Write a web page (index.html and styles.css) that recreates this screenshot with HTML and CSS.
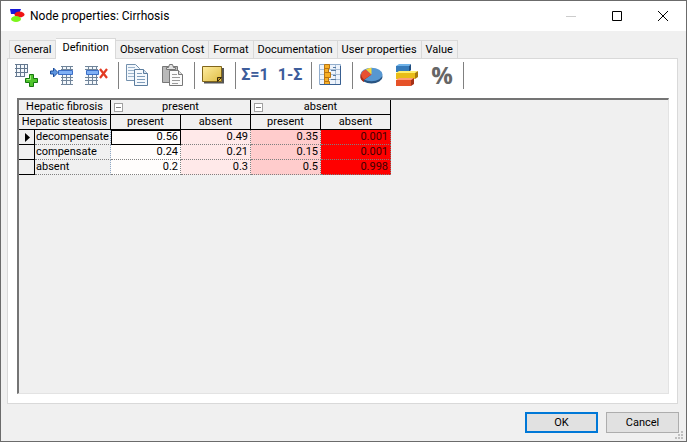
FILE: index.html
```html
<!DOCTYPE html>
<html lang="en">
<head>
  <meta charset="UTF-8">
  <title>Node properties: Cirrhosis</title>
  <link rel="stylesheet" href="styles.css">
</head>
<body>
  <div class="window">
    <header class="titlebar">
      <svg class="app-icon" width="16" height="16" viewBox="0 0 16 16">
        <path d="M1 1h11l-2 5H2z" fill="#1818d8"/>
        <ellipse cx="10.500" cy="6.500" rx="5" ry="3" fill="#f01414"/>
        <ellipse cx="7" cy="11" rx="5" ry="3" fill="#7cf51c"/>
      </svg>
      <h1>Node properties: Cirrhosis</h1>
      <div class="window-buttons">
        <button class="win-btn" aria-label="Minimize" disabled>
          <svg width="10" height="10"><path d="M0 5.500h10" stroke="#ccc"/></svg>
        </button>
        <button class="win-btn" aria-label="Maximize">
          <svg width="10" height="10"><path d="M.5.5h9v9h-9z" fill="none" stroke="#000"/></svg>
        </button>
        <button class="win-btn" aria-label="Close">
          <svg width="10" height="10"><path d="M0 0l10 10M10 0L0 10" stroke="#000"/></svg>
        </button>
      </div>
    </header>

    <main class="content">
      <nav class="tabs" role="tablist">
        <button class="tab" role="tab">General</button>
        <button class="tab active" role="tab" aria-selected="true">Definition</button>
        <button class="tab" role="tab">Observation Cost</button>
        <button class="tab" role="tab">Format</button>
        <button class="tab" role="tab">Documentation</button>
        <button class="tab" role="tab">User properties</button>
        <button class="tab" role="tab">Value</button>
      </nav>

      <section class="panel">
        <div class="toolbar">
          <div class="tool-group">
            <button class="tool" aria-label="Add state">
              <svg width="24" height="24" viewBox="0 0 24 24">
                <path d="M.5 1.500h12v12H.5z" fill="#f4f8fc"/>
                <path d="M0 1.500h13M0 5.500h13M0 9.500h13M0 13.500h10M1.500 1v13M5.500 1v13M9.500 1v13M12.500 1v9" stroke="#64788f" fill="none"/>
                <path d="M14.500 11.500h4v4h4v4h-4v4h-4v-4h-4v-4h4z" fill="#4fc42c" stroke="#15780f"/>
                <path d="M15.500 12.500v4h-4" stroke="#a5ec82" fill="none"/>
              </svg>
            </button>
            <button class="tool" aria-label="Insert state">
              <svg width="24" height="24" viewBox="0 0 24 24">
                <path d="M11.500 3.500h11v18h-11z" fill="#f4f8fc"/>
                <path d="M11 3.500h12M11 6.500h12M11 14.500h12M11 17.500h12M11 21.500h12M12.500 3v19M16.500 3v19M20.500 3v19" stroke="#71859a" fill="none"/>
                <path d="M8.500 7.500h14v4h-14z" fill="#7fb0f5" stroke="#3b6ec6"/>
                <path d="M.5 8v3h3v3l4.500-4.500-4.500-4.500v3z" fill="#5e95df" stroke="#1f4f9c"/>
              </svg>
            </button>
            <button class="tool" aria-label="Delete state">
              <svg width="24" height="24" viewBox="0 0 24 24">
                <path d="M.5 3.500h12v18H.5z" fill="#f4f8fc"/>
                <path d="M0 3.500h13M0 6.500h13M0 14.500h13M0 17.500h13M0 21.500h13M3.500 3v19M7.500 3v19M11.500 3v19" stroke="#71859a" fill="none"/>
                <path d="M1.500 7.500h12v4h-12z" fill="#7fb0f5" stroke="#3b6ec6"/>
                <path d="M15 6l7 9M22 6l-7 9" stroke="#e23a22" stroke-width="2.200" fill="none"/>
              </svg>
            </button>
          </div>
          <div class="tool-group">
            <button class="tool" aria-label="Copy">
              <svg width="24" height="24" viewBox="0 0 24 24">
                <path d="M.5 1.500h9l4 4v12H.5z" fill="#f2f7fc" stroke="#7390ad"/>
                <path d="M2 4.500h7M2 7.500h9M2 10.500h9M2 13.500h9" stroke="#9db4cb"/>
                <path d="M8.500 6.500h9l4 4v12h-13z" fill="#f5f9fd" stroke="#5c7d9e"/>
                <path d="M17.500 6.500v4h4" fill="#d4e2f0" stroke="#5c7d9e"/>
                <path d="M11 10.500h5M11 13.500h8M11 16.500h8M11 19.500h8" stroke="#7f9cba"/>
              </svg>
            </button>
            <button class="tool" aria-label="Paste">
              <svg width="24" height="24" viewBox="0 0 24 24">
                <path d="M1.500 3.500h15v16h-15z" fill="#b9b9b9" stroke="#777"/>
                <path d="M5.500 6.500v-2h2l1-3h3l1 3h2v2z" fill="#e2e2e2" stroke="#777"/>
                <path d="M8.500 7.500h9l4 4v11h-13z" fill="#fafafa" stroke="#777"/>
                <path d="M17.500 7.500v4h4" fill="#ddd" stroke="#777"/>
                <path d="M11 11.500h5M11 14.500h8M11 17.500h8M11 20.500h6" stroke="#999"/>
              </svg>
            </button>
          </div>
          <div class="tool-group">
            <button class="tool" aria-label="Annotation">
              <svg width="24" height="24" viewBox="0 0 24 24">
                <defs>
                  <linearGradient id="note" x1="0" y1="0" x2="1" y2="1">
                    <stop offset="0" stop-color="#ffeda0"/>
                    <stop offset="1" stop-color="#dfbd45"/>
                  </linearGradient>
                </defs>
                <path d="M2 19.500h19V5" stroke="#555" stroke-width="2" fill="none"/>
                <path d="M.5 3.500h19v15H.5z" fill="url(#note)" stroke="#81661b"/>
                <path d="M15.500 18.500v-4h4z" fill="#c99a27" stroke="#3c2b0a"/>
              </svg>
            </button>
          </div>
          <div class="tool-group">
            <button class="tool formula" aria-label="Normalize">Σ=1</button>
            <button class="tool formula" aria-label="Complement">1-Σ</button>
          </div>
          <div class="tool-group">
            <button class="tool" aria-label="Probability wheel">
              <svg width="24" height="24" viewBox="0 0 24 24">
                <path d="M.5 1.500h21v20H.5z" fill="#edf3fb" stroke="#93aecd"/>
                <path d="M1 6.500h20M1 11.500h20M1 16.500h20M16.500 2v19" stroke="#a9bfd8"/>
                <path d="M5.500 1.500h5v4h-1v4h2v5h-2v4h1v3h-5z" fill="#f7ae25" stroke="#b87513"/>
                <path d="M5 5.500h5M5 9.500h6M5 14.500h6M5 18.500h5" stroke="#b87513"/>
                <path d="M14 4.500h3M12 7.500h5M14 12.500h3M12 16.500h5" stroke="#577aa0"/>
                <path d="M1 21.500h20.500V3" stroke="#385f91" fill="none"/>
              </svg>
            </button>
          </div>
          <div class="tool-group">
            <button class="tool" aria-label="Pie chart">
              <svg width="24" height="24" viewBox="0 0 24 24">
                <ellipse cx="11.500" cy="14" rx="11" ry="6.500" fill="#285482"/>
                <ellipse cx="11.500" cy="11.500" rx="11" ry="6.800" fill="#5797d1"/>
                <path d="M11.500 11.500L4 17v2C1.500 17.500.5 16 .5 14.500v-3z" fill="#a92e18"/>
                <path d="M11.500 11.500L4 16.500Q-2.500 10.500 5.500 6.500z" fill="#e85031"/>
                <path d="M11.500 11.500L6 6.200q3-1.500 5.500-1.500z" fill="#f7d936"/>
              </svg>
            </button>
            <button class="tool" aria-label="Bar chart">
              <svg width="24" height="24" viewBox="0 0 24 24">
                <path d="M1 3l3-2h12l-2 2z" fill="#6fb2e8"/><path d="M1 3h13v6H1z" fill="#377bba"/><path d="M14 3l2-2v6l-2 2z" fill="#1f4d80"/>
                <path d="M1 10l3-2h19l-3 2z" fill="#fff06c"/><path d="M1 10h19v6H1z" fill="#e9bd18"/><path d="M20 10l3-2v6l-3 2z" fill="#a87b0c"/>
                <path d="M1 17l3-2h15l-3 2z" fill="#ff9e78"/><path d="M1 17h15v6H1z" fill="#e65228"/><path d="M16 17l3-2v6l-3 2z" fill="#a43117"/>
              </svg>
            </button>
            <button class="tool percent" aria-label="Show percentages">%</button>
          </div>
        </div>

        <div class="grid-view">
          <table class="cpt">
            <colgroup>
              <col class="col-marker">
              <col class="col-state">
              <col class="col-value" span="4">
            </colgroup>
            <thead>
              <tr>
                <th colspan="2">Hepatic fibrosis</th>
                <th colspan="2"><button class="collapse" aria-label="Collapse present"></button>present</th>
                <th colspan="2"><button class="collapse" aria-label="Collapse absent"></button>absent</th>
              </tr>
              <tr>
                <th colspan="2">Hepatic steatosis</th>
                <th>present</th>
                <th>absent</th>
                <th>present</th>
                <th>absent</th>
              </tr>
            </thead>
            <tbody>
              <tr>
                <td class="marker"><svg width="5" height="9"><path d="M0 0l5 4.500L0 9z"/></svg></td>
                <th class="state" scope="row">decompensate</th>
                <td class="selected">0.56</td>
                <td class="low">0.49</td>
                <td class="mid">0.35</td>
                <td class="high">0.001</td>
              </tr>
              <tr>
                <td class="marker"></td>
                <th class="state" scope="row">compensate</th>
                <td>0.24</td>
                <td class="low">0.21</td>
                <td class="mid">0.15</td>
                <td class="high">0.001</td>
              </tr>
              <tr>
                <td class="marker"></td>
                <th class="state" scope="row">absent</th>
                <td>0.2</td>
                <td class="low">0.3</td>
                <td class="mid">0.5</td>
                <td class="high">0.998</td>
              </tr>
            </tbody>
          </table>
        </div>
      </section>
    </main>

    <footer class="actions">
      <button class="btn default">OK</button>
      <button class="btn">Cancel</button>
      <svg class="grip" width="8" height="8">
        <path d="M6 0h2v2H6zM3 3h2v2H3zM6 3h2v2H6zM0 6h2v2H0zM3 6h2v2H3zM6 6h2v2H6z" fill="#bfbfbf"/>
      </svg>
    </footer>
  </div>
</body>
</html>
```

FILE: styles.css
```css
* {
  box-sizing: border-box;
}
body {
  margin: 0;
  font-family: Roboto, "Liberation Sans", Arial, sans-serif;
  font-size: 11px;
  line-height: 14px;
  color: #000;
}
button {
  font: inherit;
  color: inherit;
  padding: 0;
  border: none;
  background: none;
}
svg {
  display: block;
}
.window {
  position: relative;
  display: flex;
  flex-direction: column;
  min-height: 100vh;
  border: 1px solid #6b6b6b;
  background: #f0f0f0;
}

/* title bar */
.titlebar {
  display: flex;
  align-items: center;
  height: 30px;
  padding-left: 8px;
  background: #fff;
}
.titlebar h1 {
  flex: 1;
  margin: 0 0 0 5px;
  font-size: 12px;
  font-weight: normal;
  line-height: 16px;
}
.window-buttons {
  display: flex;
  height: 100%;
}
.win-btn {
  display: flex;
  align-items: center;
  justify-content: center;
  width: 46px;
}

/* tabs */
.content {
  flex: 1;
  display: flex;
  flex-direction: column;
  padding: 7px 8px 0 6px;
}
.tabs {
  display: flex;
  align-items: flex-end;
  height: 20px;
  padding-left: 2px;
}
.tab {
  height: 18px;
  padding: 1px 4px 0;
  border: 1px solid #d9d9d9;
  border-width: 1px 1px 0 0;
  white-space: nowrap;
}
.tab:first-child {
  border-left-width: 1px;
}
.tab.active {
  position: relative;
  height: 21px;
  margin-bottom: -1px;
  padding: 0 6px 2px;
  background: #fff;
}
.panel {
  flex: 1;
  display: flex;
  flex-direction: column;
  padding: 3px 8px 9px 9px;
  border: 1px solid #d9d9d9;
  background: #fff;
}

/* toolbar */
.toolbar {
  display: flex;
  height: 36px;
  margin-left: -2px;
}
.tool-group {
  display: flex;
  gap: 11px;
  height: 27px;
  padding: 1px 9px 0 7px;
  border-right: 1px solid #808080;
}
.tool-group:first-child {
  padding-left: 0;
}
.tool {
  display: flex;
  justify-content: center;
  width: 24px;
  height: 24px;
  white-space: nowrap;
}
.formula {
  font-size: 16px;
  font-weight: bold;
  line-height: 24px;
  color: #3d5d9b;
}
.percent {
  font: bold 24px/24px "Open Sans", sans-serif;
  color: #666;
}

/* probability table */
.grid-view {
  flex: 1;
  border: 1px solid #e3e3e3;
  border-top: 2px solid #747474;
  border-left: 2px solid #747474;
  background: #f0f0f0;
}
.cpt {
  width: 372px;
  table-layout: fixed;
  border-collapse: separate;
  border-spacing: 0;
}
.col-marker {
  width: 16px;
}
.col-state {
  width: 76px;
}
.col-value {
  width: 70px;
}
.cpt th,
.cpt td {
  height: 15px;
  padding: 0;
  font-weight: normal;
  line-height: 14px;
  white-space: nowrap;
}
.cpt thead th {
  position: relative;
  border-right: 1px solid #000;
  border-bottom: 1px solid #000;
  text-align: center;
}
.cpt tbody td {
  padding-right: 2px;
  border-right: 1px dotted #808080;
  border-bottom: 1px dotted #808080;
  background: #fffdfc;
  text-align: right;
}
.cpt tbody .marker {
  padding: 0 0 0 6px;
  border-right: 1px solid #000;
  border-bottom: 1px solid #000;
  background: #f0f0f0;
}
.cpt tbody .state {
  padding-left: 1px;
  border-right: 1px dotted #8fa8c6;
  border-bottom: 1px dotted #808080;
  text-align: left;
}
.cpt tbody .selected {
  outline: 1px solid #000;
  outline-offset: -1px;
}
.cpt tbody .low {
  background: #ffe9e9;
}
.cpt tbody .mid {
  background: #ffcccc;
}
.cpt tbody .high {
  background: #ff0000;
  color: #400000;
}
.collapse {
  position: absolute;
  top: 3px;
  left: 3px;
  width: 9px;
  height: 9px;
  border: 1px solid #a0a0a0;
  background: linear-gradient(#808080, #808080) center / 5px 1px no-repeat #fff;
}

/* dialog buttons */
.actions {
  display: flex;
  justify-content: flex-end;
  gap: 8px;
  padding: 8px 7px 8px 0;
}
.btn {
  width: 73px;
  height: 21px;
  border: 1px solid #adadad;
  background: #e1e1e1;
}
.btn.default {
  border: 2px solid #0078d7;
}
.grip {
  position: absolute;
  right: 3px;
  bottom: 2px;
}
```
